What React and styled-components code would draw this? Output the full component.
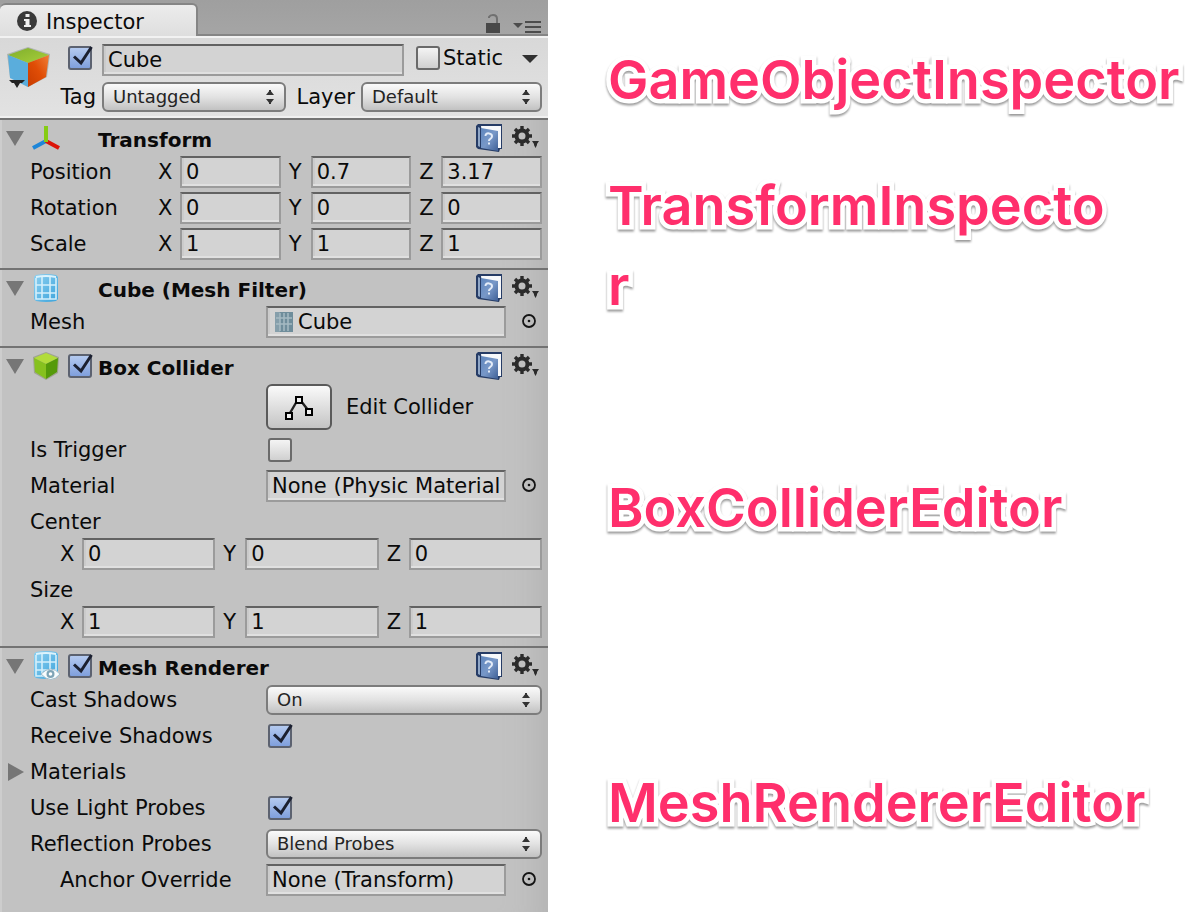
import React, { useId } from 'react';
import styled, { createGlobalStyle, css } from 'styled-components';

const GlobalStyle = createGlobalStyle`
  *, *::before, *::after { box-sizing: border-box; }
  body { margin: 0; background: #fff; }
  button, input, select { font: inherit; color: inherit; margin: 0; }
`;

const Page = styled.main`
  display: grid;
  grid-template-columns: minmax(440px, 548fr) minmax(0, 656fr);
  min-height: 100vh;
`;

/* ---------- inspector panel ---------- */

const Panel = styled.section`
  display: flex;
  flex-direction: column;
  background: #c2c2c2;
  box-shadow: inset 2px 0 #cdcdcd, inset -44px 0 34px -34px #b2b2b2;
  color: #0a0a0a;
  font-family: "DejaVu Sans", "Noto Sans", sans-serif;
  font-size: 21px;
  line-height: 28px;
`;

const TabBar = styled.header`
  display: flex;
  align-items: flex-end;
  height: 36px;
  background: linear-gradient(#9f9f9f, #a5a5a5);
  border-bottom: 2px solid #858585;
`;

const Tab = styled.button`
  display: flex;
  align-items: center;
  gap: 8px;
  width: 198px;
  height: 33px;
  margin-bottom: -2px;
  padding: 2px 0 0 16px;
  border: 2px solid #858585;
  border-width: 2px 2px 0 0;
  border-radius: 6px 6px 0 0;
  background: linear-gradient(#ececec, #dedede);
  text-align: left;
`;

const TabTools = styled.div`
  display: flex;
  align-items: flex-end;
  gap: 12px;
  margin-left: auto;
  padding: 0 7px 0 0;
`;

const IconButton = styled.button`
  display: flex;
  flex: none;
  padding: 0;
  border: 0;
  background: none;
`;

const ObjectHeader = styled.div`
  display: flex;
  gap: 6px;
  padding: 6px 6px 4px;
  border-top: 2px solid #f2f2f2;
  border-bottom: 2px solid #f0f0f0;
  background: linear-gradient(#d8d8d8, #e2e2e2);
`;

const ObjectFields = styled.div`
  display: flex;
  flex: 1;
  flex-direction: column;
  gap: 6px;
  min-width: 0;
`;

const NameRow = styled.div`
  display: flex;
  align-items: flex-start;
  gap: 10px;
  padding-left: 12px;
`;

const ToggleGroup = styled.div`
  display: flex;
  flex: none;
  align-items: center;
  gap: 3px;
  height: 28px;
  width: ${(p) => (p.$wide ? '126px' : 'auto')};
  margin-left: ${(p) => (p.$wide ? '2px' : '0')};
`;

const StaticMenu = styled(IconButton)`
  margin: 0 4px 0 auto;
`;

const TagRow = styled.div`
  display: grid;
  grid-template-columns: 46px 184fr 75px 181fr;
  align-items: center;
`;

const TagLabel = styled.label`
  padding-right: 6px;
  text-align: right;
`;

/* ---------- component sections ---------- */

const SectionBox = styled.section`
  padding: 0 6px 8px 0;
  border-top: 2px solid #737373;
`;

const SectionHead = styled.div`
  display: flex;
  align-items: center;
  height: 36px;
  padding-left: 6px;
`;

const TypeIcon = styled.span`
  display: flex;
  width: 28px;
  margin: 0 8px;
`;

const CheckSlot = styled.span`
  display: flex;
  width: 30px;
`;

const Title = styled.h2`
  flex: 1;
  margin: 0;
  padding-top: 4px;
  font-size: 20px;
  font-weight: 700;
  line-height: 28px;
  white-space: nowrap;
`;

const HeadTools = styled.div`
  display: flex;
  align-items: center;
  gap: 10px;
  padding-right: 2px;
`;

const Rows = styled.div`
  display: flex;
  flex-direction: column;
  gap: 4px;
`;

const Row = styled.div`
  display: grid;
  grid-template-columns: 236px minmax(0, 1fr);
  align-items: center;
  min-height: 32px;
  padding-left: 30px;
`;

const VectorRow = styled(Row)`
  grid-template-columns: 124px minmax(0, 1fr);
`;

const StackedVector = styled.div`
  display: flex;
  flex-direction: column;
  padding-left: 30px;
  line-height: 32px;
`;

const Label = styled.label`
  padding-left: ${(p) => (p.$nested ? '30px' : '0')};
  white-space: nowrap;
`;

const Axes = styled.div`
  display: grid;
  grid-template-columns: repeat(3, minmax(0, 1fr));
  gap: 4px;
  padding-left: ${(p) => (p.$indent ? '26px' : '0')};
`;

const Axis = styled.label`
  display: grid;
  grid-template-columns: 26px minmax(0, 1fr);
  align-items: center;
`;

const AxisName = styled.span`
  padding-left: 4px;
`;

const fieldLook = css`
  width: 100%;
  min-width: 0;
  height: 32px;
  border: 2px solid #9b9b9b;
  border-top-color: #626262;
  border-radius: 0;
  background: #d3d3d3;
  box-shadow: inset 0 -2px #e0e0e0, inset 2px 0 #cbcbcb;
  outline: 0;
`;

const Field = styled.input`
  ${fieldLook}
  padding: 0 3px 0 ${(p) => (p.$withIcon ? '30px' : '4px')};
`;

const ObjectRow = styled.div`
  display: flex;
  align-items: center;
`;

const ObjectFieldBox = styled.div`
  position: relative;
  flex: 1;
  display: flex;
  min-width: 0;

  svg {
    position: absolute;
    top: 6px;
    left: 8px;
  }
`;

const Picker = styled(IconButton)`
  margin: 0 5px 0 15px;
`;

const SelectBox = styled.div`
  position: relative;
  display: flex;

  svg {
    position: absolute;
    top: 7px;
    right: 11px;
    pointer-events: none;
  }
`;

const Select = styled.select`
  appearance: none;
  width: 100%;
  height: 30px;
  padding: 0 28px 0 9px;
  border: 2px solid #7c7c7c;
  border-radius: 6px;
  background: linear-gradient(#fafafa, #e2e2e2 50%, #c2c2c2);
  color: #242424;
  font-size: 18px;
  line-height: 24px;
`;

const CheckBox = styled.span`
  position: relative;
  display: flex;
  flex: none;

  svg {
    position: absolute;
    top: -2px;
    left: 0;
    pointer-events: none;
  }
`;

const CheckInput = styled.input`
  appearance: none;
  width: 24px;
  height: 24px;
  border: 2px solid #6a6a6a;
  border-radius: 3px;
  background: linear-gradient(#f4f4f4, #d0d0d0);

  &:checked {
    border-color: #5c6270;
    background: linear-gradient(#b4caf0, #7f9fdc);
  }
`;

const CheckCell = styled.div`
  display: flex;
  padding-left: 2px;
`;

const EditRow = styled.div`
  display: flex;
  align-items: center;
  gap: 14px;
  padding-left: 266px;
`;

const EditButton = styled.button`
  display: flex;
  align-items: center;
  justify-content: center;
  width: 66px;
  height: 46px;
  padding: 0;
  border: 2px solid #5a5a5a;
  border-radius: 6px;
  background: linear-gradient(#fafafa, #c4c4c4);
`;

const FoldRow = styled.button`
  display: flex;
  align-items: center;
  gap: 6px;
  height: 32px;
  padding: 0 0 0 8px;
  border: 0;
  background: none;
  text-align: left;
`;

/* ---------- annotations ---------- */

const Notes = styled.aside`
  display: flex;
  flex-direction: column;
  min-width: 0;
  padding: 40px 0 0 60px;
`;

const Note = styled.p`
  max-width: ${(p) => (p.$narrow ? '508px' : 'none')};
  margin: 0 0 ${(p) => p.$space}px;
  color: #ff2f6c;
  font-family: "Inter", "Noto Sans CJK JP", sans-serif;
  font-size: 54px;
  font-weight: 600;
  line-height: 80px;
  word-break: break-all;
  -webkit-text-stroke: 9px #fff;
  paint-order: stroke fill;
  filter: drop-shadow(0 2px 1px rgba(0, 0, 0, 0.4));
`;

/* ---------- icons ---------- */

const InfoIcon = () => (
  <svg width="22" height="22" viewBox="0 0 22 22">
    <circle cx="11" cy="10" r="10" fill="#3a3a3a" />
    <path d="M9.500 3h4v3h-4zM8 8h5.500v6H15v2H8v-2h1.500v-4H8z" fill="#f0f0f0" />
  </svg>
);

const LockIcon = () => (
  <svg width="16" height="20" viewBox="0 0 16 20">
    <path d="M4 4V3q1-2 4-2 4 0 4 4v4" fill="none" stroke="#707070" strokeWidth="2" />
    <path d="M1 9h14v10H1z" fill="#484848" />
  </svg>
);

const PaneMenuIcon = () => (
  <svg width="28" height="14" viewBox="0 0 28 14">
    <path d="M0 3h10L5 8z" fill="#4c4c4c" />
    <path d="M12 2h16M12 7h16M12 12h16" stroke="#4c4c4c" strokeWidth="2" />
  </svg>
);

const PrefabIcon = () => (
  <svg width="44" height="44" viewBox="0 0 44 44">
    <defs>
      <linearGradient id="cubeTop" x1="0" x2="1" y1="0" y2="1">
        <stop offset="0" stopColor="#7fae2c" />
        <stop offset="1" stopColor="#a8cf3a" />
      </linearGradient>
      <linearGradient id="cubeSide" x1="0" x2="1" y1="1" y2="0">
        <stop offset="0" stopColor="#c83c00" />
        <stop offset=".5" stopColor="#e04d06" />
        <stop offset="1" stopColor="#f08038" />
      </linearGradient>
    </defs>
    <path d="M22 3L1 10l3 23 18 10 19-10 3-23z" fill="#7d8a80" opacity=".45" />
    <path d="M22 4L2 11l20 8 21-8z" fill="url(#cubeTop)" />
    <path d="M2 11l20 8v24L4 34z" fill="#5aaddc" />
    <path d="M22 19l21-8-3 22-18 10z" fill="url(#cubeSide)" />
    <path d="M3 36h16l-3 3h-2l-3 5-3-5H6z" fill="#222" />
  </svg>
);

const TransformIcon = () => (
  <svg width="28" height="28" viewBox="0 0 28 28">
    <path d="M14 17L1 24" stroke="#1e86d8" strokeWidth="4" />
    <path d="M14 17l13 7" stroke="#dc1408" strokeWidth="4" />
    <path d="M14 2v16" stroke="#86cc14" strokeWidth="4" />
  </svg>
);

const MeshGrid = () => (
  <>
    <defs>
      <linearGradient id="meshFill" x1="0" x2="1" y1="0" y2="1">
        <stop offset="0" stopColor="#8fd0f0" />
        <stop offset="1" stopColor="#3ba4dc" />
      </linearGradient>
    </defs>
    <path d="M4 1q10-2 20 0l2 2v22l-2 2q-10 2-20 0l-2-2V3z" fill="url(#meshFill)" />
    <path d="M4 2q10-2 20 0v2q-10-2-20 0z" fill="#dcf3fc" />
    <path d="M10 3v22M18 3v22M4 11h20M4 19h20M4 4v21h20V4" fill="none" stroke="#d4effb" strokeWidth="1.600" />
  </>
);

const MeshFilterIcon = () => (
  <svg width="28" height="28" viewBox="0 0 28 28">
    <MeshGrid />
  </svg>
);

const MeshRendererIcon = () => (
  <svg width="28" height="30" viewBox="0 0 28 30">
    <MeshGrid />
    <path d="M9 23q10-10 19 0-9 11-19 0z" fill="#f8fcfd" stroke="#9dbccb" />
    <circle cx="18.500" cy="23" r="4" fill="#7ea4b6" />
    <circle cx="18.500" cy="23" r="1.800" fill="#fff" />
  </svg>
);

const ColliderIcon = () => (
  <svg width="28" height="30" viewBox="0 0 28 30">
    <path d="M14 1L1 6l1 16 12 7 12-7 1-16z" fill="#879070" opacity=".6" />
    <path d="M14 2L2 7l12 6 12-6z" fill="#b2dc3a" />
    <path d="M2 7l12 6v15L3 21z" fill="#86c11e" />
    <path d="M26 7l-12 6v15l11-7z" fill="#559a0a" />
  </svg>
);

const HelpIcon = () => (
  <svg width="26" height="28" viewBox="0 0 26 28">
    <defs>
      <linearGradient id="bookCover" x1="0" x2="1" y1="0" y2="1">
        <stop offset="0" stopColor="#5f86bd" />
        <stop offset=".5" stopColor="#7898c8" />
        <stop offset="1" stopColor="#3e5f96" />
      </linearGradient>
    </defs>
    <path d="M2 0h24v25h-2l-1 3-21-3-2-2V2z" fill="#263c66" />
    <path d="M5 2h20v22H8z" fill="#f6f8fb" />
    <path d="M2 3l2 1v19l-2-1z" fill="#8fa6c6" />
    <path d="M5 4l17 3v20L5 24z" fill="url(#bookCover)" />
    <path d="M9.500 12q0-3 3.500-2.600 3 .4 3 2.800 0 1.800-1.700 2.700-1.300.6-1.300 2.100M13 18.500v2" fill="none" stroke="#e4ecf8" strokeWidth="2" />
  </svg>
);

const GearIcon = () => (
  <svg width="28" height="24" viewBox="0 0 28 24">
    <circle cx="10" cy="10" r="5.500" fill="none" stroke="#2b2b2b" strokeWidth="4" />
    <path
      d="M10 0v4M10 16v4M0 10h4M16 10h4M3 3l3 3M14 14l3 3M17 3l-3 3M6 14l-3 3"
      stroke="#2b2b2b"
      strokeWidth="3.400"
    />
    <path d="M20 15h7l-2 3v1l-1.500 3-1.500-3v-1z" fill="#2b2b2b" />
  </svg>
);

const FoldOpenIcon = () => (
  <svg width="18" height="16" viewBox="0 0 18 16">
    <path d="M0 1h18L9 16z" fill="#767676" />
  </svg>
);

const FoldClosedIcon = () => (
  <svg width="16" height="18" viewBox="0 0 16 18">
    <path d="M0 0v18l16-9z" fill="#767676" />
  </svg>
);

const DropIcon = () => (
  <svg width="16" height="10" viewBox="0 0 16 10">
    <path d="M0 2h16l-8 8z" fill="#303030" />
  </svg>
);

const CheckIcon = () => (
  <svg width="26" height="26" viewBox="0 0 26 26">
    <path d="M6 12.500l7 6.500L23.500 3" fill="none" stroke="#1b2030" strokeWidth="3" />
  </svg>
);

const PopupIcon = () => (
  <svg width="10" height="16" viewBox="0 0 10 16">
    <path d="M1 6h8L5 1zM1 10h8l-4 5z" fill="#333" />
    <path d="M5 1v5M5 10v5" stroke="#333" strokeWidth="2" />
  </svg>
);

const PickerIcon = () => (
  <svg width="16" height="16" viewBox="0 0 16 16">
    <circle cx="8" cy="7" r="6" fill="none" stroke="#141414" strokeWidth="1.800" />
    <circle cx="8" cy="7" r="1.300" fill="#141414" />
  </svg>
);

const EditIcon = () => (
  <svg width="28" height="26" viewBox="0 0 28 26">
    <path d="M5 19l7-12M16 7l7 9" stroke="#222" strokeWidth="2.400" />
    <path d="M11 3h6v6h-6zM1 19h6v6H1zM21 15h6v6h-6z" fill="#f0f0f0" stroke="#000" strokeWidth="2" />
  </svg>
);

const MeshAssetIcon = () => (
  <svg width="20" height="20" viewBox="0 0 20 20">
    <path d="M1 0h18v20H1z" fill="#6f8d9b" />
    <path d="M6 1v18M10 1v18M14 1v18M2 6h16M2 12h16" stroke="#a6bac3" strokeWidth="1.500" />
    <path d="M1 0h5v20H1z" fill="#a9bbc2" opacity=".4" />
  </svg>
);

/* ---------- controls ---------- */

function Check({ id, checked = false, label }) {
  return (
    <CheckBox>
      <CheckInput id={id} type="checkbox" checked={checked} readOnly aria-label={label} />
      {checked && <CheckIcon />}
    </CheckBox>
  );
}

function Popup({ id, value }) {
  return (
    <SelectBox>
      <Select id={id} defaultValue={value}>
        <option>{value}</option>
      </Select>
      <PopupIcon />
    </SelectBox>
  );
}

function Vector({ name, values, indent }) {
  return (
    <Axes $indent={indent} role="group" aria-label={name}>
      {['X', 'Y', 'Z'].map((axis, i) => (
        <Axis key={axis}>
          <AxisName>{axis}</AxisName>
          <Field type="text" defaultValue={values[i]} />
        </Axis>
      ))}
    </Axes>
  );
}

function VectorLine({ name, values }) {
  return (
    <VectorRow>
      <span>{name}</span>
      <Vector name={name} values={values} />
    </VectorRow>
  );
}

function StackedVectorLine({ name, values }) {
  return (
    <StackedVector>
      <span>{name}</span>
      <Vector name={name} values={values} indent />
    </StackedVector>
  );
}

function ObjectLine({ name, value, icon, nested }) {
  const id = useId();
  return (
    <Row>
      <Label htmlFor={id} $nested={nested}>{name}</Label>
      <ObjectRow>
        <ObjectFieldBox>
          <Field id={id} type="text" readOnly value={value} $withIcon={Boolean(icon)} />
          {icon}
        </ObjectFieldBox>
        <Picker type="button" aria-label={`Select ${name}`}><PickerIcon /></Picker>
      </ObjectRow>
    </Row>
  );
}

function CheckLine({ name, checked }) {
  const id = useId();
  return (
    <Row>
      <Label htmlFor={id}>{name}</Label>
      <CheckCell><Check id={id} checked={checked} /></CheckCell>
    </Row>
  );
}

function PopupLine({ name, value }) {
  const id = useId();
  return (
    <Row>
      <Label htmlFor={id}>{name}</Label>
      <Popup id={id} value={value} />
    </Row>
  );
}

function Section({ title, icon, toggle, children }) {
  return (
    <SectionBox>
      <SectionHead>
        <IconButton type="button" aria-label={`Fold ${title}`}><FoldOpenIcon /></IconButton>
        <TypeIcon>{icon}</TypeIcon>
        <CheckSlot>{toggle && <Check checked label={`Enable ${title}`} />}</CheckSlot>
        <Title>{title}</Title>
        <HeadTools>
          <IconButton type="button" aria-label="Help"><HelpIcon /></IconButton>
          <IconButton type="button" aria-label="Settings"><GearIcon /></IconButton>
        </HeadTools>
      </SectionHead>
      <Rows>{children}</Rows>
    </SectionBox>
  );
}

export default function App() {
  return (
    <>
      <GlobalStyle />
      <Page>
        <Panel>
          <TabBar>
            <Tab type="button"><InfoIcon />Inspector</Tab>
            <TabTools>
              <IconButton type="button" aria-label="Lock"><LockIcon /></IconButton>
              <IconButton type="button" aria-label="Pane menu"><PaneMenuIcon /></IconButton>
            </TabTools>
          </TabBar>

          <ObjectHeader>
            <PrefabIcon />
            <ObjectFields>
              <NameRow>
                <ToggleGroup>
                  <Check checked label="Active" />
                </ToggleGroup>
                <Field type="text" defaultValue="Cube" aria-label="Name" />
                <ToggleGroup $wide>
                  <Check id="static" />
                  <label htmlFor="static">Static</label>
                  <StaticMenu type="button" aria-label="Static options"><DropIcon /></StaticMenu>
                </ToggleGroup>
              </NameRow>
              <TagRow>
                <TagLabel htmlFor="tag">Tag</TagLabel>
                <Popup id="tag" value="Untagged" />
                <TagLabel htmlFor="layer">Layer</TagLabel>
                <Popup id="layer" value="Default" />
              </TagRow>
            </ObjectFields>
          </ObjectHeader>

          <Section title="Transform" icon={<TransformIcon />}>
            <VectorLine name="Position" values={['0', '0.7', '3.17']} />
            <VectorLine name="Rotation" values={['0', '0', '0']} />
            <VectorLine name="Scale" values={['1', '1', '1']} />
          </Section>

          <Section title="Cube (Mesh Filter)" icon={<MeshFilterIcon />}>
            <ObjectLine name="Mesh" value="Cube" icon={<MeshAssetIcon />} />
          </Section>

          <Section title="Box Collider" icon={<ColliderIcon />} toggle>
            <EditRow>
              <EditButton id="edit-collider" type="button"><EditIcon /></EditButton>
              <label htmlFor="edit-collider">Edit Collider</label>
            </EditRow>
            <CheckLine name="Is Trigger" />
            <ObjectLine name="Material" value="None (Physic Material)" />
            <StackedVectorLine name="Center" values={['0', '0', '0']} />
            <StackedVectorLine name="Size" values={['1', '1', '1']} />
          </Section>

          <Section title="Mesh Renderer" icon={<MeshRendererIcon />} toggle>
            <PopupLine name="Cast Shadows" value="On" />
            <CheckLine name="Receive Shadows" checked />
            <FoldRow type="button"><FoldClosedIcon />Materials</FoldRow>
            <CheckLine name="Use Light Probes" checked />
            <PopupLine name="Reflection Probes" value="Blend Probes" />
            <ObjectLine name="Anchor Override" value="None (Transform)" nested />
          </Section>
        </Panel>

        <Notes>
          <Note $space={46}>GameObjectInspector</Note>
          <Note $space={142} $narrow>TransformInspector</Note>
          <Note $space={215}>BoxColliderEditor</Note>
          <Note $space={0}>MeshRendererEditor</Note>
        </Notes>
      </Page>
    </>
  );
}
